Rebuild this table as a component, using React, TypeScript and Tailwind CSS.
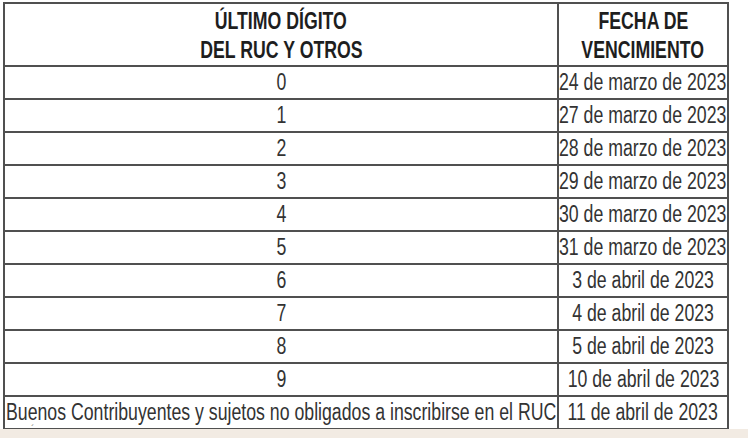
import React from "react";

const rows: [string, string, boolean][] = [
  ["0", "24 de marzo de 2023", false],
  ["1", "27 de marzo de 2023", false],
  ["2", "28 de marzo de 2023", false],
  ["3", "29 de marzo de 2023", false],
  ["4", "30 de marzo de 2023", false],
  ["5", "31 de marzo de 2023", false],
  ["6", "3 de abril de 2023", true],
  ["7", "4 de abril de 2023", true],
  ["8", "5 de abril de 2023", true],
  ["9", "10 de abril de 2023", true],
];

function N({ children, left }: { children: React.ReactNode; left?: boolean }) {
  return (
    <div className={`flex ${left ? "justify-start" : "justify-center"}`}>
      <span
        className={`shrink-0 whitespace-nowrap scale-x-[0.77] ${left ? "origin-left" : "origin-center"}`}
      >
        {children}
      </span>
    </div>
  );
}

export default function App() {
  return (
    <div
      className="w-[748px] h-[438px] bg-white flex flex-col overflow-hidden"
      style={{ fontFamily: '"Liberation Sans", Arial, sans-serif' }}
    >
      <div className="pl-[3px] pt-[2px] h-[429px]">
        <table className="table-fixed w-[724px] border-collapse text-[#333333] text-[23px] leading-none">
          <colgroup>
            <col className="w-[554px]" />
            <col className="w-[170px]" />
          </colgroup>
          <thead>
            <tr className="h-[63px]">
              <th className="border-2 border-[#505050] font-bold leading-[29px] text-[#1e1e1e] p-0 pt-[2px]">
                <N>ÚLTIMO DÍGITO</N>
                <N>DEL RUC Y OTROS</N>
              </th>
              <th className="border-2 border-[#505050] font-bold leading-[29px] text-[#1e1e1e] p-0 pt-[2px]">
                <N>FECHA DE</N>
                <N>VENCIMIENTO</N>
              </th>
            </tr>
          </thead>
          <tbody>
            {rows.map(([d, f, c]) => (
              <tr key={d} className="h-[33px]">
                <td className="border-2 border-[#505050] p-0">
                  <N>{d}</N>
                </td>
                <td className="border-2 border-[#505050] p-0">
                  <N left={!c}>{f}</N>
                </td>
              </tr>
            ))}
            <tr className="h-[33px]">
              <td className="border-2 border-[#505050] p-0 pl-[1px]">
                <N left>Buenos Contribuyentes y sujetos no obligados a inscribirse en el RUC</N>
              </td>
              <td className="border-2 border-[#505050] p-0">
                <N>11 de abril de 2023</N>
              </td>
            </tr>
          </tbody>
        </table>
      </div>
      <div className="flex-1 bg-[#f2ebe3] relative">
        <span className="absolute left-[31px] top-[-4px] text-[10px] leading-none text-[#777]">´</span>
      </div>
    </div>
  );
}
